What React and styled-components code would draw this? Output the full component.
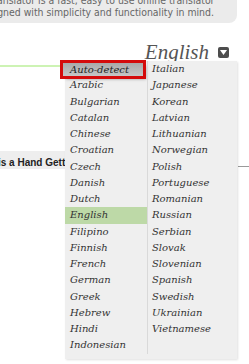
import React from 'react';
import styled, { createGlobalStyle } from 'styled-components';

const GlobalStyle = createGlobalStyle`
    html, body {
        margin: 0;
        padding: 0;
        background: #ffffff;
        overflow: hidden;
    }
`

const Page = styled.div`
    position: relative;
    width: 249px;
    height: 364px;
    overflow: hidden;
    font-family: "Liberation Sans", Arial, sans-serif;
`

// intro box, scrolled so its left part is off screen
const Intro = styled.div`
    width: 237px;
    height: 23px;
    background: #ebebeb;
    border-bottom-right-radius: 8px;
    overflow: hidden;
`
const IntroText = styled.div`
    margin-top: -6.5px;
    font-family: "DejaVu Sans Condensed", "DejaVu Sans", sans-serif;
    font-size: 10.4px;
    line-height: 12px;
    color: #666;
`
const IntroLine = styled.div`
    white-space: nowrap;
    margin-left: ${props => props.$shift}px;
`

const Header = styled.div`
    display: flex;
    justify-content: flex-end;
    align-items: center;
    gap: 9px;
    height: 24px;
    margin-top: 17px;
    padding-right: 20px;
`
const Selected = styled.span`
    font-family: "Liberation Serif", "Times New Roman", serif;
    font-style: italic;
    font-size: 21px;
    color: #555;
`
const ArrowButton = styled.span`
    display: flex;
    align-items: center;
    justify-content: center;
    width: 11px;
    height: 11px;
    border-radius: 2px;
    background: #4d4d4d;
`

const Input = styled.div`
    width: 237px;
    height: 36px;
    margin-top: 1px;
    margin-left: -2px;
    border-top: 2px solid #cdf3b4;
    border-right: 1px solid #dff5cf;
    box-sizing: border-box;
`

const HintRow = styled.div`
    display: flex;
    justify-content: space-between;
    align-items: flex-start;
    margin-top: 50px;
`
const HintBar = styled.div`
    width: 160px;
    height: 18px;
    padding-top: 5px;
    box-sizing: border-box;
    background: #eeeeee;
    font-size: 10px;
    font-weight: bold;
    line-height: 13px;
    color: #222;
    white-space: nowrap;
    overflow: hidden;
`
const HintText = styled.span`
    display: block;
    margin-left: -2px;
`
const Dash = styled.span`
    width: 11px;
    height: 1px;
    margin-top: 15px;
    background: #9a9a9a;
`

// the language menu floating over the form
const Menu = styled.div`
    position: absolute;
    top: 61px;
    left: 65px;
    width: 172px;
    padding-bottom: 5px;
    display: grid;
    grid-template-columns: 82px 1fr;
    background: #efefef;
    box-shadow: 1px 1px 2px rgba(0, 0, 0, .12);
`
const Column = styled.div`
    display: flex;
    flex-direction: column;
    border-left: ${props => props.$divider ? '1px solid #d9d9d9' : 'none'};
`
const Item = styled.div`
    height: 16.25px;
    line-height: 16.25px;
    padding-left: ${props => props.$divided ? 4 : 5}px;
    font-family: "DejaVu Serif", Georgia, serif;
    font-style: italic;
    font-size: 10px;
    color: #333;
    white-space: nowrap;
    background: ${props => props.$active ? '#bdd9a7' : 'transparent'};
`
const FocusItem = styled.div`
    height: 13px;
    line-height: 13px;
    margin: 2px 4px 1.25px -2px;
    padding-left: 7px;
    font-family: "DejaVu Serif", Georgia, serif;
    font-style: italic;
    font-size: 10px;
    color: #222;
    white-space: nowrap;
    background: linear-gradient(#a9a9a9, #c6c6c6);
    outline: 3px solid #d40b0b;
    box-shadow: 3px 3px 3px rgba(0, 0, 0, .35);
`

const left = ['Arabic', 'Bulgarian', 'Catalan', 'Chinese', 'Croatian', 'Czech', 'Danish', 'Dutch', 'English', 'Filipino', 'Finnish', 'French', 'German', 'Greek', 'Hebrew', 'Hindi', 'Indonesian'];
const right = ['Italian', 'Japanese', 'Korean', 'Latvian', 'Lithuanian', 'Norwegian', 'Polish', 'Portuguese', 'Romanian', 'Russian', 'Serbian', 'Slovak', 'Slovenian', 'Spanish', 'Swedish', 'Ukrainian', 'Vietnamese'];

const App = () => {
    return (
        <>
        <GlobalStyle />
        <Page>
            <Intro>
                <IntroText>
                    <IntroLine $shift={-11}>Translator is a fast, easy to use online translator</IntroLine>
                    <IntroLine $shift={-22}>designed with simplicity and functionality in mind.</IntroLine>
                </IntroText>
            </Intro>

            <Header>
                <Selected>English</Selected>
                <ArrowButton>
                    <svg width="7" height="5" viewBox="0 0 7 5">
                        <path d="M0 0 H7 L3.5 5 Z" fill="#fff" />
                    </svg>
                </ArrowButton>
            </Header>

            <Input />

            <HintRow>
                <HintBar>
                    <HintText>is a Hand Getting Started</HintText>
                </HintBar>
                <Dash />
            </HintRow>

            <Menu>
                <Column>
                    <FocusItem>Auto-detect</FocusItem>
                    {left.map(lang => (
                        <Item key={lang} $active={lang === 'English'}>{lang}</Item>
                    ))}
                </Column>
                <Column $divider>
                    {right.map(lang => (
                        <Item key={lang} $divided>{lang}</Item>
                    ))}
                </Column>
            </Menu>
        </Page>
        </>
    )
}

export default App;
